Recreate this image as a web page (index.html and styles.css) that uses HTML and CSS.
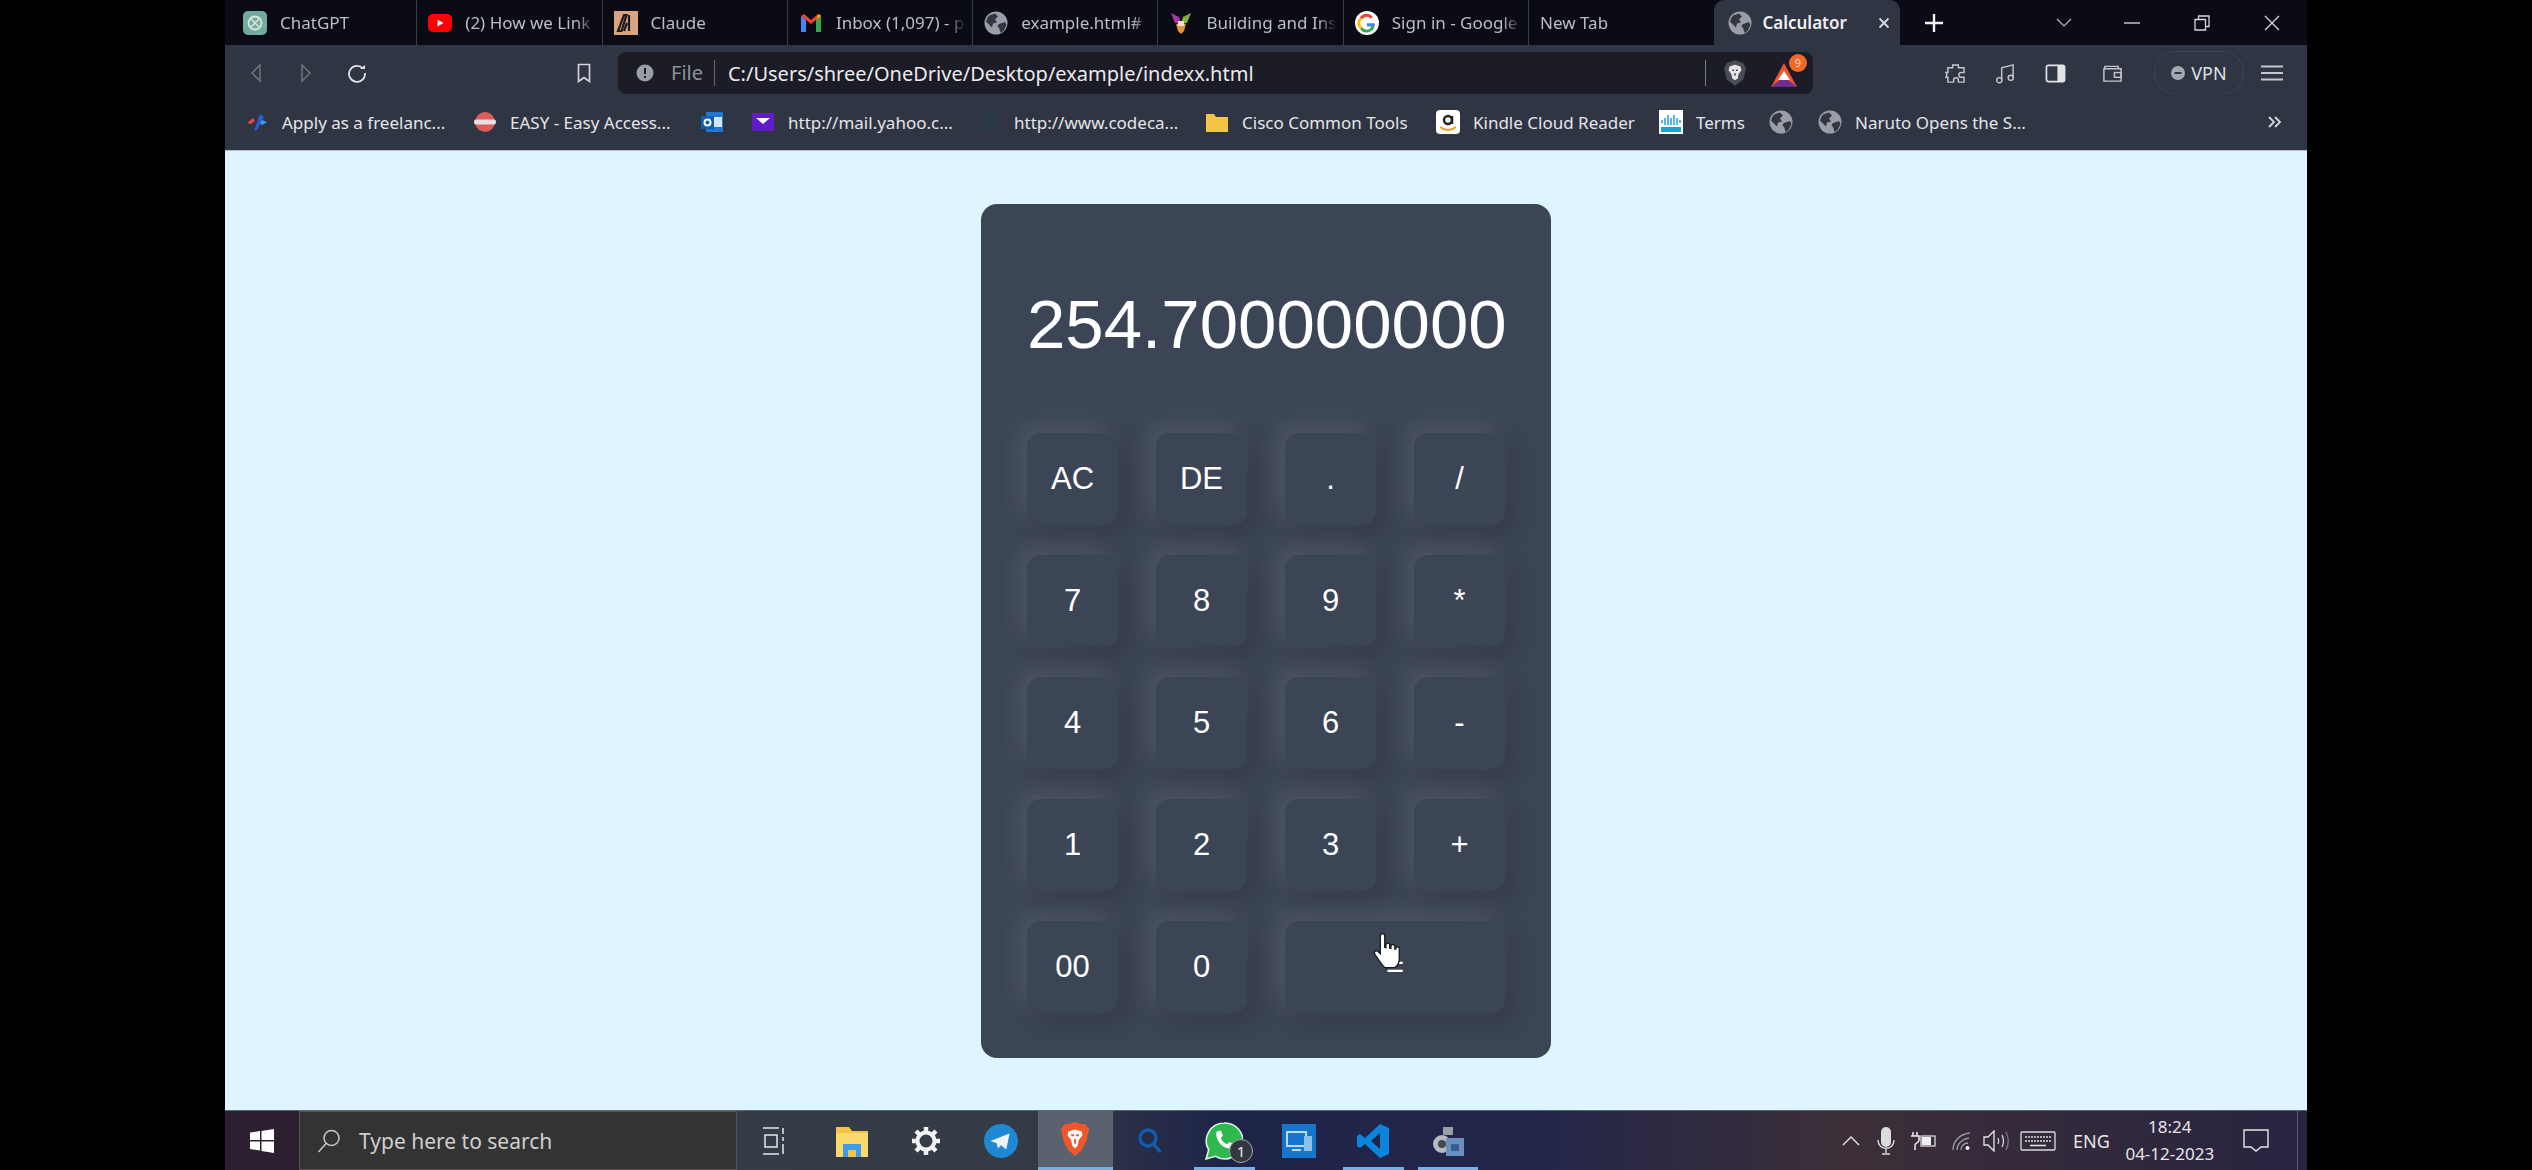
FILE: index.html
```html
<!DOCTYPE html>
<html lang="en">
<head>
  <meta charset="UTF-8" />
  <title>Calculator</title>
  <link rel="stylesheet" href="styles.css">
</head>
<body>
  <svg class="defs" width="0" height="0">
    <symbol id="globe" viewBox="0 0 24 24">
      <circle cx="12" cy="12" r="11.5" fill="#9a9ea8"/>
      <path d="M5 4.5l6-2 3 3-3 3 2 3-4 1-1 4-3-3-3-3 1-3z" fill="#31363f"/>
      <path d="M15 13l6-2 1.500 3-3 6-3 2-1-4-2-3z" fill="#31363f"/>
    </symbol>
  </svg>

  <div class="screen">
    <!-- tabs -->
    <div class="tabstrip">
      <div class="tab">
        <svg class="tab-icon" viewBox="0 0 24 24"><rect width="24" height="24" rx="5" fill="#74aa9c"/><circle cx="12" cy="12" r="6.500" fill="none" stroke="#d8e8e3" stroke-width="1.800"/><path d="M8 8l8 8M16 8l-8 8" stroke="#d8e8e3" stroke-width="1.400"/></svg>
        <span class="tab-title">ChatGPT</span>
      </div>
      <div class="tab">
        <svg class="tab-icon" viewBox="0 0 24 24"><rect y="3" width="24" height="18" rx="5" fill="#f00"/><path d="M9.500 8.500l6 3.500-6 3.500z" fill="#fff"/></svg>
        <span class="tab-title">(2) How we Link</span>
      </div>
      <div class="tab">
        <svg class="tab-icon" viewBox="0 0 24 24"><rect width="24" height="24" fill="#d8a57f"/><path d="M4 20L10 4h2.500l-5 16zM10 20l3-8M15 4v16" stroke="#1c1c1c" stroke-width="2.200" fill="none"/></svg>
        <span class="tab-title">Claude</span>
      </div>
      <div class="tab">
        <svg class="tab-icon" viewBox="0 0 24 24"><path d="M2 21V5l5 4v12z" fill="#4285f4"/><path d="M22 21V5l-5 4v12z" fill="#34a853"/><path d="M2 5l3-2 7 6 7-6 3 2-5 4-5 4-5-4z" fill="#ea4335"/><path d="M17 9l3-6 2 2z" fill="#fbbc04"/></svg>
        <span class="tab-title">Inbox (1,097) - p</span>
      </div>
      <div class="tab">
        <svg class="tab-icon"><use href="#globe"/></svg>
        <span class="tab-title">example.html#</span>
      </div>
      <div class="tab">
        <svg class="tab-icon" viewBox="0 0 24 24"><path d="M2 2l8 4 2 7-6-1z" fill="#a43aa6"/><path d="M22 2l-8 4-2 7 6-1z" fill="#7fb23f"/><path d="M7 13h10l-2 7-3 3-3-3z" fill="#e3973a"/><path d="M9 10h6v5H9z" fill="#f2e3c8"/></svg>
        <span class="tab-title">Building and Ins</span>
      </div>
      <div class="tab">
        <svg class="tab-icon" viewBox="0 0 24 24"><circle cx="12" cy="12" r="12" fill="#fff"/><path d="M19.500 12.400H12v2.800h4.300a4.800 4.800 0 0 1-8.800 1L5 18a8 8 0 0 0 14.500-5.600z" fill="#34a853"/><path d="M5 6.200a8 8 0 0 0 0 11.800l2.500-1.800a5 5 0 0 1 0-8.400z" fill="#fbbc04"/><path d="M5 6.200a8 8 0 0 1 12.800-.500L15.800 7.800a5 5 0 0 0-8.300.400z" fill="#ea4335"/><path d="M19.500 12.400H12v2.800h7.300z" fill="#4285f4"/></svg>
        <span class="tab-title">Sign in - Google</span>
      </div>
      <div class="tab tab-plain">
        <span class="tab-title">New Tab</span>
      </div>
      <div class="tab tab-active">
        <svg class="tab-icon"><use href="#globe"/></svg>
        <span class="tab-title">Calculator</span>
        <svg class="tab-close" viewBox="0 0 12 12"><path d="M1.500 1.500l9 9M10.500 1.500l-9 9" stroke="#d8dae0" stroke-width="1.800"/></svg>
      </div>
      <svg class="new-tab" viewBox="0 0 20 20"><path d="M10 1v18M1 10h18" stroke="#f2f2f2" stroke-width="2.400"/></svg>
      <div class="win-btns">
        <svg class="win-chevron" viewBox="0 0 16 10"><path d="M1 1l7 7 7-7" fill="none" stroke="#b6b8bd" stroke-width="1.200"/></svg>
        <svg class="win-min" viewBox="0 0 16 2"><path d="M0 1h16" stroke="#d0d0d4" stroke-width="1.400"/></svg>
        <svg class="win-max" viewBox="0 0 16 16"><path d="M1 4.500h10.500V15H1zM4.500 4.500V1H15v10.500h-3.500" fill="none" stroke="#d8d8dc" stroke-width="1.300"/></svg>
        <svg class="win-close" viewBox="0 0 16 16"><path d="M1 1l14 14M15 1L1 15" stroke="#d8d8dc" stroke-width="1.300"/></svg>
      </div>
    </div>

    <!-- toolbar -->
    <div class="toolbar">
      <div class="nav-btns">
        <svg class="nav-icon" viewBox="0 0 12 20"><path d="M10 2L2 10l8 8z" fill="none" stroke="#6b707b" stroke-width="1.600"/></svg>
        <svg class="nav-icon" viewBox="0 0 12 20"><path d="M2 2l8 8-8 8z" fill="none" stroke="#6b707b" stroke-width="1.600"/></svg>
        <svg class="nav-reload" viewBox="0 0 20 20"><path d="M16 5.500A8 8 0 1 0 18 10" fill="none" stroke="#e2e3e7" stroke-width="1.800"/><path d="M13 6h5V2z" fill="#e2e3e7"/></svg>
      </div>
      <svg class="bookmark-icon" viewBox="0 0 14 20"><path d="M1.500 1.500h11v17L7 14.500l-5.500 4z" fill="none" stroke="#cfd1d6" stroke-width="1.700"/></svg>
      <div class="addressbar">
        <svg class="info-icon" viewBox="0 0 18 18"><circle cx="9" cy="9" r="8.500" fill="#9a9da3"/><path d="M9 4v6M9 12v2" stroke="#1b1c25" stroke-width="2"/></svg>
        <span class="url-scheme">File</span>
        <span class="url-text">C:/Users/shree/OneDrive/Desktop/example/indexx.html</span>
        <span class="url-sep"></span>
        <svg class="shield" viewBox="0 0 24 28"><path d="M12 0l9 3 3 6-3 12-9 7-9-7L0 9l3-6z" fill="#4a4d57"/><path d="M6 7l6-2 6 2 1 4-3 4-1 5-3 2-3-2-1-5-3-4z" fill="#e6e6e8"/><path d="M9 11h2M13 11h2M12 14v3" stroke="#4a4d57" stroke-width="1.500"/></svg>
        <div class="rewards">
          <svg class="rewards-tri" viewBox="0 0 28 28"><path d="M14 2l13 24H1z" fill="#f0532b"/><path d="M1 26l13-10 13 10z" fill="#6b2f93"/><path d="M14 10l6 9H8z" fill="#fff"/></svg>
          <span class="rewards-badge">9</span>
        </div>
      </div>
      <div class="tool-icons">
        <svg class="tool-icon" viewBox="0 0 22 22"><path d="M8 2h6v3h6v5h-3a2.500 2.500 0 0 0 0 5h3v5h-6v-2a2.500 2.500 0 0 0-5 0v2H3v-5H1l1-3-1-2h2V5h5z" fill="none" stroke="#c4c6cc" stroke-width="1.500"/></svg>
        <svg class="tool-icon" viewBox="0 0 22 22"><path d="M7 18V5l12-3v13" fill="none" stroke="#c4c6cc" stroke-width="1.500"/><circle cx="4.500" cy="18" r="2.700" fill="none" stroke="#c4c6cc" stroke-width="1.500"/><circle cx="16.500" cy="15.500" r="2.700" fill="none" stroke="#c4c6cc" stroke-width="1.500"/></svg>
        <svg class="tool-icon" viewBox="0 0 22 22"><rect x="1.500" y="2.500" width="19" height="17" rx="2" fill="none" stroke="#e2e3e7" stroke-width="1.800"/><rect x="13" y="3" width="7" height="16" fill="#e2e3e7"/></svg>
        <svg class="tool-icon tool-wallet" viewBox="0 0 22 22"><path d="M3 6V3.500h14V6M2 6h18v13H2z" fill="none" stroke="#c4c6cc" stroke-width="1.500"/><rect x="13" y="10" width="7" height="5" fill="none" stroke="#c4c6cc" stroke-width="1.500"/></svg>
        <div class="vpn-pill">
          <svg class="vpn-dot" viewBox="0 0 14 14"><circle cx="7" cy="7" r="7" fill="#a4a8b0"/><path d="M3.500 7h7" stroke="#2f3542" stroke-width="2"/></svg>
          <span>VPN</span>
        </div>
        <svg class="menu-icon" viewBox="0 0 22 16"><path d="M0 1.500h22M0 8h22M0 14.500h22" stroke="#c4c6cc" stroke-width="1.800"/></svg>
      </div>
    </div>

    <!-- bookmarks -->
    <div class="bookmarks">
      <div class="bm bm-1">
        <svg class="bm-icon" viewBox="0 0 24 24"><path d="M2 13l6-5 2 3-4 3z" fill="#e04848"/><path d="M15 4l-6 17 3-1 7-13z" fill="#2a5bd8"/><path d="M17 10l5 2-5 3-2-2z" fill="#3f9be8"/></svg>
        <span>Apply as a freelanc...</span>
      </div>
      <div class="bm bm-2">
        <svg class="bm-icon" viewBox="0 0 24 24"><circle cx="12" cy="12" r="10" fill="#dc5c5c"/><rect x="1" y="9.500" width="22" height="5" rx="2" fill="#e8e0e0"/></svg>
        <span>EASY - Easy Access...</span>
      </div>
      <div class="bm bm-3">
        <svg class="bm-icon" viewBox="0 0 24 24"><rect x="6" y="2" width="17" height="20" rx="1" fill="#1f78d1"/><rect x="13" y="7" width="9" height="10" fill="#cfe4f7"/><rect x="1" y="6" width="13" height="13" fill="#0f5fb0"/><circle cx="7.500" cy="12.500" r="3" fill="none" stroke="#fff" stroke-width="2"/></svg>
      </div>
      <div class="bm bm-4">
        <svg class="bm-icon" viewBox="0 0 24 24"><rect x="1" y="3" width="22" height="18" fill="#5f1cc8"/><path d="M5 8h14l-7 6z" fill="#fff"/></svg>
        <span>http://mail.yahoo.c...</span>
      </div>
      <div class="bm bm-5">
        <svg class="bm-icon" viewBox="0 0 24 24"><rect x="4" y="2" width="16" height="20" rx="2" fill="#2b3849"/></svg>
        <span>http://www.codeca...</span>
      </div>
      <div class="bm bm-6">
        <svg class="bm-icon" viewBox="0 0 24 24"><path d="M1 4h8l2 3h12v15H1z" fill="#f3c544"/></svg>
        <span>Cisco Common Tools</span>
      </div>
      <div class="bm bm-7">
        <svg class="bm-icon" viewBox="0 0 24 24"><rect width="24" height="24" rx="4" fill="#fff"/><circle cx="12" cy="10" r="4" fill="none" stroke="#222" stroke-width="2.400"/><path d="M16 6v8" stroke="#222" stroke-width="2.400"/><path d="M4 17c5 4 11 4 16 0" fill="none" stroke="#f39a1f" stroke-width="2"/></svg>
        <span>Kindle Cloud Reader</span>
      </div>
      <div class="bm bm-8">
        <svg class="bm-icon" viewBox="0 0 24 24"><rect width="24" height="24" fill="#fff"/><path d="M3 10v3M6 8v7M9 5v10M12 8v7M15 5v10M18 8v7M21 10v3" stroke="#1ba0d7" stroke-width="1.500"/><rect x="2" y="17" width="20" height="5" fill="#1ba0d7"/></svg>
        <span>Terms</span>
      </div>
      <div class="bm bm-9">
        <svg class="bm-icon"><use href="#globe"/></svg>
      </div>
      <div class="bm bm-10">
        <svg class="bm-icon"><use href="#globe"/></svg>
        <span>Naruto Opens the S...</span>
      </div>
      <svg class="bm-more" viewBox="0 0 14 12"><path d="M1 1l5 5-5 5M7 1l5 5-5 5" fill="none" stroke="#d4d6db" stroke-width="1.800"/></svg>
    </div>

    <!-- page -->
    <main class="page">
      <div class="calculator">
        <div class="display">254.700000000</div>
        <div class="keys">
          <button class="key">AC</button>
          <button class="key">DE</button>
          <button class="key">.</button>
          <button class="key">/</button>
          <button class="key">7</button>
          <button class="key">8</button>
          <button class="key">9</button>
          <button class="key">*</button>
          <button class="key">4</button>
          <button class="key">5</button>
          <button class="key">6</button>
          <button class="key">-</button>
          <button class="key">1</button>
          <button class="key">2</button>
          <button class="key">3</button>
          <button class="key">+</button>
          <button class="key">00</button>
          <button class="key">0</button>
          <button class="key key-wide">=
            <svg class="hand-cursor" viewBox="0 0 24 34"><path d="M6 2.500a2 2 0 0 1 4 0V13l1 .2V10.500a1.800 1.800 0 0 1 3.500 0v3l1 .2v-2a1.800 1.800 0 0 1 3.500 0v2.500l.8.2v-1a1.700 1.700 0 0 1 3.200 0V23c0 4-2 6.500-4 8H10c-2-2-3.500-4-5.500-7L1 19c-1-2 1-4 3-2.500l2 2z" fill="#fff" stroke="#1a1a1a" stroke-width="1.200"/></svg>
          </button>
        </div>
      </div>
    </main>

    <!-- taskbar -->
    <div class="taskbar">
      <div class="start-btn">
        <svg class="start-icon" viewBox="0 0 24 24"><path d="M0 3.500l10-1.400V11H0zM11.500 1.900L24 0v11H11.500zM0 12.500h10v9L0 20zM11.500 12.500H24V24l-12.500-1.900z" fill="#fff"/></svg>
      </div>
      <div class="searchbox">
        <svg class="search-icon" viewBox="0 0 24 24"><circle cx="14.500" cy="9" r="7.500" fill="none" stroke="#c8c8c8" stroke-width="1.500"/><path d="M9 14.500L1.500 23" stroke="#c8c8c8" stroke-width="1.500"/></svg>
        <span>Type here to search</span>
      </div>
      <div class="task-apps">
        <div class="task-app task-view">
          <svg class="app-icon app-small" viewBox="0 0 24 28"><path d="M1 1h16M1 27h16M3 8h12v12H3zM21 1v6M21 10v4M21 17v10" fill="none" stroke="#e6e6e6" stroke-width="1.500"/></svg>
        </div>
        <div class="task-app">
          <svg class="app-icon" viewBox="0 0 34 34"><path d="M1 3h13l3 4h16v26H1z" fill="#f3c544"/><path d="M1 9h32v24H1z" fill="#fbd96b"/><path d="M8 20h18v13H8z" fill="#3f9be8"/><path d="M13 26h8v7h-8z" fill="#f3c544"/></svg>
        </div>
        <div class="task-app">
          <svg class="app-icon app-gear" viewBox="0 0 30 30"><circle cx="15" cy="15" r="8.500" fill="none" stroke="#f2f2f2" stroke-width="4"/><path d="M15 1v5M15 24v5M1 15h5M24 15h5M5 5l4 4M21 21l4 4M25 5l-4 4M9 21l-4 4" stroke="#f2f2f2" stroke-width="4.500"/></svg>
        </div>
        <div class="task-app">
          <svg class="app-icon" viewBox="0 0 32 32"><circle cx="16" cy="16" r="16" fill="#1e88d2"/><path d="M6 16L24 9l-3 15-5-4-3 3-1-5z" fill="#eaf3fa"/></svg>
        </div>
        <div class="task-app task-active">
          <svg class="app-icon" viewBox="0 0 30 36"><path d="M15 0l6 2 5 0 4 6-3 12-5 10-7 6-7-6-5-10L0 8l4-6 5 0z" fill="#f0552b"/><path d="M8 10l7-2 7 2 1 4-4 5-1 6-3 3-3-3-1-6-4-5z" fill="#fff"/><path d="M11 14h3M16 14h3M15 18v5" stroke="#f0552b" stroke-width="2"/></svg>
        </div>
        <div class="task-app">
          <svg class="app-icon app-small" viewBox="0 0 24 26"><circle cx="10" cy="10" r="8" fill="none" stroke="#0f5cb0" stroke-width="3.400"/><path d="M15.500 16l7 8" stroke="#0f5cb0" stroke-width="3.400"/></svg>
        </div>
        <div class="task-app task-open">
          <svg class="app-icon app-whatsapp" viewBox="0 0 36 36"><path d="M18 1a17 17 0 0 0-14.500 25.500L1 35l9-2.500A17 17 0 1 0 18 1z" fill="#2fb84e" stroke="#e8f3e8" stroke-width="1.500"/><path d="M11 9l4-1 2 5-2 2c1 3 3 5 6 6l2-2 5 2-1 4c-9 2-18-7-16-16z" fill="#fff"/></svg>
          <span class="app-badge">1</span>
        </div>
        <div class="task-app">
          <svg class="app-icon" viewBox="0 0 34 34"><rect width="34" height="34" fill="#1875cc"/><rect x="5" y="8" width="19" height="14" fill="none" stroke="#b8daf4" stroke-width="2"/><rect x="22" y="12" width="8" height="15" fill="#8cc1ea"/><path d="M10 26h9" stroke="#b8daf4" stroke-width="2"/></svg>
        </div>
        <div class="task-app task-open">
          <svg class="app-icon" viewBox="0 0 34 34"><path d="M24 0l9 4v26l-9 4L9 20l-5 4-3-2v-10l3-2 5 4z" fill="#0a84dc"/><path d="M24 9l-9 8 9 8z" fill="#1d2546"/></svg>
        </div>
        <div class="task-app task-open">
          <svg class="app-icon" viewBox="0 0 34 34"><path d="M12 3h10v8H12z" fill="#9a9fa6"/><circle cx="11" cy="20" r="9" fill="#b6bac0"/><circle cx="11" cy="20" r="4" fill="#454a52"/><rect x="15" y="14" width="18" height="18" fill="#6b90bf"/><rect x="20" y="20" width="8" height="7" fill="#3a5f94"/></svg>
        </div>
      </div>
      <div class="tray">
        <svg class="tray-icon tray-caret" viewBox="0 0 18 10"><path d="M1 9l8-8 8 8" fill="none" stroke="#e6e6e6" stroke-width="1.400"/></svg>
        <svg class="tray-icon tray-mic" viewBox="0 0 18 28"><rect x="4" y="0" width="10" height="20" rx="5" fill="#dcdcdc"/><path d="M1 13c0 11 16 11 16 0M9 21v5M5 27h8" fill="none" stroke="#dcdcdc" stroke-width="1.400"/></svg>
        <svg class="tray-icon tray-battery" viewBox="0 0 26 18"><path d="M2 0v4M6 0v4M0 4h8v4c0 3-4 3-4 5v5" fill="none" stroke="#eee" stroke-width="1.500"/><rect x="10" y="4" width="14" height="10" fill="none" stroke="#dcdcdc" stroke-width="1.300"/><rect x="11" y="5" width="9" height="8" fill="#eee"/></svg>
        <svg class="tray-icon tray-wifi" viewBox="0 0 20 20"><path d="M1 19C1 10 8 3 18 2M5 19c0-6 5-11 12-12M9 19c0-4 3-7 7-7" fill="none" stroke="#9c9ca2" stroke-width="1.300"/><circle cx="15.500" cy="17" r="2" fill="#eee"/></svg>
        <svg class="tray-icon tray-speaker" viewBox="0 0 26 22"><path d="M1 7h4l6-6v20l-6-6H1z" fill="none" stroke="#e6e6e6" stroke-width="1.300"/><path d="M15 8c1 2 1 4 0 6M19 5c2 4 2 8 0 12" fill="none" stroke="#d8d8d8" stroke-width="1.300"/><path d="M23 2c3 6 3 12 0 18" fill="none" stroke="#77777e" stroke-width="1.300"/></svg>
        <svg class="tray-icon tray-keyboard" viewBox="0 0 36 20"><rect x="1" y="1" width="34" height="18" rx="1" fill="none" stroke="#dcdcdc" stroke-width="1.300"/><path d="M5 6h26M5 10h26" stroke="#dcdcdc" stroke-width="1.600" stroke-dasharray="2 1"/><path d="M10 14.500h16" stroke="#dcdcdc" stroke-width="1.600"/></svg>
        <span class="tray-lang">ENG</span>
        <div class="tray-clock">
          <span>18:24</span>
          <span>04-12-2023</span>
        </div>
        <svg class="tray-icon tray-action" viewBox="0 0 26 24"><path d="M1 1h24v17h-7l-5 4-5-4H1z" fill="none" stroke="#e6e6e6" stroke-width="1.400"/></svg>
        <span class="tray-divider"></span>
      </div>
    </div>
  </div>
</body>
</html>
```

FILE: styles.css
```css
* {
  box-sizing: border-box;
}

html, body {
  margin: 0;
  height: 100%;
}

body {
  background-color: #000;
  font-family: 'Noto Sans', 'Open Sans', sans-serif;
  overflow: hidden;
}

.defs {
  position: absolute;
}

.screen {
  width: 2082px;
  height: 1170px;
  margin: 0 auto;
  display: flex;
  flex-direction: column;
}

/* tabs */
.tabstrip {
  height: 45px;
  flex: none;
  display: flex;
  align-items: stretch;
  padding-left: 7px;
  background-color: #0b0b15;
  color: #bcbec5;
  font-size: 17px;
}

.tab {
  width: 185.300px;
  flex: none;
  display: flex;
  align-items: center;
  gap: 13px;
  padding: 0 6px 0 11px;
  border-right: 1px solid #3a3d47;
  overflow: hidden;
}

.tab-icon {
  width: 24px;
  height: 24px;
  flex: none;
}

.tab-title {
  flex: 1;
  min-width: 0;
  white-space: nowrap;
  overflow: hidden;
  -webkit-mask-image: linear-gradient(90deg, #000 85%, transparent);
  mask-image: linear-gradient(90deg, #000 85%, transparent);
}

.tab-plain {
  border-right: none;
}

.tab-active {
  width: 186px;
  background-color: #2f3542;
  border: none;
  border-radius: 10px 10px 0 0;
  color: #f0f0f2;
  font-weight: 600;
  padding: 0 10px 0 14px;
  gap: 10px;
}

.tab-active .tab-title {
  -webkit-mask-image: none;
  mask-image: none;
}

.tab-close {
  width: 12px;
  height: 12px;
  flex: none;
}

.new-tab {
  width: 20px;
  height: 20px;
  flex: none;
  align-self: center;
  margin-left: 24px;
}

.win-btns {
  flex: 1;
  display: flex;
  align-items: center;
  padding-left: 112px;
}

.win-chevron {
  width: 16px;
  height: 10px;
  flex: none;
}

.win-min {
  width: 16px;
  height: 2px;
  flex: none;
  margin-left: 52px;
}

.win-max {
  width: 16px;
  height: 16px;
  flex: none;
  margin-left: 54px;
}

.win-close {
  width: 16px;
  height: 16px;
  flex: none;
  margin-left: 54px;
}

/* toolbar */
.toolbar {
  height: 49px;
  flex: none;
  display: flex;
  align-items: center;
  padding-top: 7px;
  background-color: #2f3542;
}

.nav-btns {
  display: flex;
  align-items: center;
  width: 348px;
  padding-left: 25px;
  gap: 38px;
}

.nav-icon {
  width: 12px;
  height: 20px;
  flex: none;
}

.nav-reload {
  width: 20px;
  height: 20px;
  flex: none;
  margin-left: -3px;
}

.bookmark-icon {
  width: 14px;
  height: 20px;
  flex: none;
  margin-left: 4px;
}

.addressbar {
  width: 1195px;
  height: 42px;
  flex: none;
  margin-left: 27px;
  display: flex;
  align-items: center;
  padding-left: 18px;
  background-color: #1b1c25;
  border-radius: 8px;
  font-size: 20px;
}

.info-icon {
  width: 18px;
  height: 18px;
  flex: none;
}

.url-scheme {
  margin-left: 17px;
  padding-right: 11px;
  border-right: 1px solid #62656e;
  color: #8f929b;
  line-height: 26px;
}

.url-text {
  margin-left: 13px;
  width: 977px;
  flex: none;
  color: #eaeaee;
  white-space: nowrap;
}

.url-sep {
  width: 1px;
  height: 26px;
  flex: none;
  background-color: #777a82;
}

.shield {
  width: 22px;
  height: 26px;
  flex: none;
  margin-left: 18px;
}

.rewards {
  position: relative;
  width: 30px;
  height: 30px;
  flex: none;
  margin-left: 24px;
}

.rewards-tri {
  width: 28px;
  height: 28px;
  display: block;
  margin-top: 3px;
}

.rewards-badge {
  position: absolute;
  top: -4px;
  right: -7px;
  width: 18px;
  height: 18px;
  border-radius: 50%;
  background-color: #f0692b;
  color: #ffd9c4;
  font-size: 11px;
  line-height: 18px;
  text-align: center;
}

.tool-icons {
  display: flex;
  align-items: center;
  flex: 1;
  padding-left: 132px;
  gap: 29px;
}

.tool-icon {
  width: 21px;
  height: 21px;
  flex: none;
}

.tool-wallet {
  margin-left: 7px;
}

.vpn-pill {
  width: 90px;
  height: 44px;
  flex: none;
  display: flex;
  align-items: center;
  justify-content: center;
  gap: 6px;
  margin-left: 2px;
  border: 1px solid #3e4452;
  border-radius: 22px;
  color: #dfe1e5;
  font-size: 18px;
}

.vpn-dot {
  width: 14px;
  height: 14px;
}

.menu-icon {
  width: 22px;
  height: 16px;
  flex: none;
  margin-left: -12px;
}

/* bookmarks */
.bookmarks {
  height: 57px;
  flex: none;
  display: flex;
  align-items: center;
  padding-left: 20px;
  background-color: #2f3542;
  color: #e4e5e9;
  font-size: 17px;
  border-bottom: 1px solid #a9c3d4;
}

.bm {
  display: flex;
  align-items: center;
  flex: none;
  gap: 13px;
  white-space: nowrap;
}

.bm-icon {
  width: 24px;
  height: 24px;
  flex: none;
}

.bm-1 { width: 228px; }
.bm-2 { width: 227px; }
.bm-3 { width: 51px; }
.bm-4 { width: 226px; }
.bm-5 { width: 228px; }
.bm-6 { width: 231px; }
.bm-7 { width: 223px; }
.bm-8 { width: 110px; }
.bm-9 { width: 49px; }
.bm-10 { width: 245px; }

.bm-more {
  width: 14px;
  height: 12px;
  flex: none;
  margin-left: 205px;
}

/* page */
.page {
  flex: 1;
  display: flex;
  align-items: center;
  justify-content: center;
  background-color: #def5ff;
}

.calculator {
  width: 570px;
  padding: 0 46px 45px;
  background-color: #3c4555;
  border-radius: 16px;
}

.display {
  padding-top: 68px;
  padding-right: 2px;
  height: 229px;
  line-height: 106px;
  text-align: right;
  color: #fff;
  font-family: 'Liberation Sans', Arial, sans-serif;
  font-size: 69px;
  white-space: nowrap;
}

.keys {
  display: grid;
  grid-template-columns: repeat(4, 91px);
  grid-auto-rows: 92px;
  gap: 30px 38px;
}

.key {
  position: relative;
  padding: 0;
  border: none;
  border-radius: 14px;
  background-color: #3c4555;
  color: #fff;
  font-family: 'Liberation Sans', Arial, sans-serif;
  font-size: 31px;
  box-shadow: -8px -8px 24px rgba(255, 255, 255, 0.1), 8px 8px 24px rgba(0, 0, 0, 0.16);
}

.key-wide {
  grid-column: span 2;
}

.hand-cursor {
  position: absolute;
  left: 88px;
  top: 12px;
  width: 28px;
  height: 38px;
}

/* taskbar */
.taskbar {
  height: 60px;
  flex: none;
  display: flex;
  align-items: stretch;
  background: linear-gradient(90deg, #2b1f30 0, #2b1f30 74px, #343c48 512px, #343b46 800px, #1e2448 1000px, #22264a 1300px, #3c2f38 1620px, #2a2440 2040px);
  color: #e6e6e6;
  border-top: 1px solid #5a6670;
}

.start-btn {
  width: 74px;
  flex: none;
  display: flex;
  align-items: center;
  justify-content: center;
}

.start-icon {
  width: 24px;
  height: 24px;
}

.searchbox {
  width: 438px;
  flex: none;
  display: flex;
  align-items: center;
  gap: 18px;
  padding-left: 17px;
  background-color: #333;
  border: 1px solid #555;
  color: #cfcfcf;
  font-size: 21px;
}

.search-icon {
  width: 24px;
  height: 24px;
  flex: none;
}

.task-apps {
  display: flex;
  flex: none;
}

.task-app {
  position: relative;
  width: 74.500px;
  flex: none;
  display: flex;
  align-items: center;
  justify-content: center;
}

.task-view {
  margin-right: 3px;
}

.task-active {
  background-color: #5a6270;
  border-bottom: 3px solid #6fb3ee;
}

.task-open::after {
  content: "";
  position: absolute;
  left: 7px;
  right: 7px;
  bottom: 0;
  height: 3px;
  background-color: #6fb3ee;
}

.app-icon {
  width: 34px;
  height: 34px;
}

.app-small {
  width: 24px;
  height: 28px;
}

.app-gear {
  width: 30px;
  height: 30px;
}

.app-whatsapp {
  width: 38px;
  height: 38px;
}

.app-badge {
  position: absolute;
  left: 42px;
  top: 28px;
  width: 24px;
  height: 24px;
  border-radius: 50%;
  background-color: #33373f;
  border: 1px solid #aaa;
  color: #eee;
  font-size: 15px;
  line-height: 22px;
  text-align: center;
}

.tray {
  flex: 1;
  display: flex;
  align-items: center;
  padding-left: 357px;
}

.tray-icon {
  flex: none;
}

.tray-caret { width: 18px; height: 10px; }
.tray-mic { width: 18px; height: 28px; margin-left: 17px; }
.tray-battery { width: 26px; height: 18px; margin-left: 16px; }
.tray-wifi { width: 20px; height: 20px; margin-left: 15px; }
.tray-speaker { width: 26px; height: 22px; margin-left: 11px; }
.tray-keyboard { width: 36px; height: 20px; margin-left: 11px; }

.tray-lang {
  flex: none;
  margin-left: 17px;
  font-size: 18px;
}

.tray-clock {
  width: 100px;
  flex: none;
  margin-left: 10px;
  display: flex;
  flex-direction: column;
  align-items: center;
  gap: 3px;
  font-size: 17px;
  line-height: 24px;
}

.tray-action {
  width: 26px;
  height: 24px;
  margin-left: 23px;
}

.tray-divider {
  width: 1px;
  height: 100%;
  flex: none;
  margin-left: 28px;
  background-color: #5c5c64;
}
```
